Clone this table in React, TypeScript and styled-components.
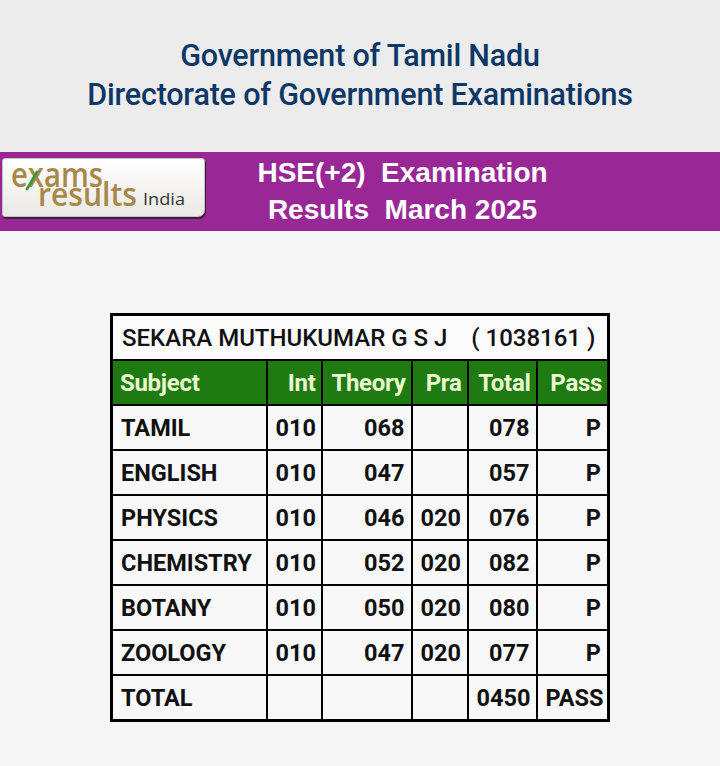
import React from "react";
import styled, { createGlobalStyle } from "styled-components";

const GlobalStyle = createGlobalStyle`
  html, body {
    margin: 0;
    padding: 0;
    background: #f6f6f6;
  }
  body {
    font-family: Roboto, "Liberation Sans", sans-serif;
  }
`;

type Mark = {
    subject: string;
    int: string;
    theory: string;
    pra: string;
    total: string;
    pass: string;
};

const marks: Mark[] = [
    { subject: "TAMIL", int: "010", theory: "068", pra: "", total: "078", pass: "P" },
    { subject: "ENGLISH", int: "010", theory: "047", pra: "", total: "057", pass: "P" },
    { subject: "PHYSICS", int: "010", theory: "046", pra: "020", total: "076", pass: "P" },
    { subject: "CHEMISTRY", int: "010", theory: "052", pra: "020", total: "082", pass: "P" },
    { subject: "BOTANY", int: "010", theory: "050", pra: "020", total: "080", pass: "P" },
    { subject: "ZOOLOGY", int: "010", theory: "047", pra: "020", total: "077", pass: "P" },
    { subject: "TOTAL", int: "", theory: "", pra: "", total: "0450", pass: "PASS" },
];

const LogoMark = () => (
    <LogoSvg width="201" height="57" viewBox="0 0 201 57">
        <LogoWord x="8" y="28" fontSize="34" textLength="92" lengthAdjust="spacingAndGlyphs">exams</LogoWord>
        {/* green stroke across the x */}
        <path d="M24 30 L34 13" stroke="#3c9b35" strokeWidth="2.8" strokeLinecap="round" />
        <LogoWord x="35" y="47" fontSize="33" textLength="99" lengthAdjust="spacingAndGlyphs">results</LogoWord>
        <LogoSmall x="140" y="46" fontSize="16" textLength="42" lengthAdjust="spacingAndGlyphs">India</LogoSmall>
    </LogoSvg>
);

const App = () => {
    return (
        <Page>
            <GlobalStyle />
            <Header>
                <HeaderTitle>Government of Tamil Nadu</HeaderTitle>
                <HeaderTitle>Directorate of Government Examinations</HeaderTitle>
            </Header>

            <Band>
                <Logo>
                    <LogoMark />
                </Logo>
                <BandTitle>
                    <BandLine>HSE(+2)  Examination</BandLine>
                    <BandLine>Results  March 2025</BandLine>
                </BandTitle>
            </Band>

            <Main>
                <ResultTable>
                    <colgroup>
                        <col style={{ width: 155 }} />
                        <col style={{ width: 55 }} />
                        <col style={{ width: 90 }} />
                        <col style={{ width: 56 }} />
                        <col style={{ width: 69 }} />
                        <col style={{ width: 72 }} />
                    </colgroup>
                    <tbody>
                        <tr>
                            <NameCell colSpan={6}>SEKARA MUTHUKUMAR G S J    ( 1038161 )</NameCell>
                        </tr>
                        <tr>
                            <HeadCell>Subject</HeadCell>
                            <HeadCell $right>Int</HeadCell>
                            <HeadCell $right>Theory</HeadCell>
                            <HeadCell $right>Pra</HeadCell>
                            <HeadCell $right>Total</HeadCell>
                            <HeadCell $right>Pass</HeadCell>
                        </tr>
                        {marks.map(m => (
                            <tr key={m.subject}>
                                <Cell>{m.subject}</Cell>
                                <Cell $center>{m.int}</Cell>
                                <Cell $right>{m.theory}</Cell>
                                <Cell $center>{m.pra}</Cell>
                                <Cell $right>{m.total}</Cell>
                                <Cell $right>{m.pass}</Cell>
                            </tr>
                        ))}
                    </tbody>
                </ResultTable>
            </Main>
        </Page>
    );
};

const Page = styled.div`
  width: 720px;
  min-height: 766px;
  background: #f6f6f6;
`;

const Header = styled.header`
  height: 152px;
  box-sizing: border-box;
  background: #ececec;
  display: flex;
  flex-direction: column;
  align-items: center;
  justify-content: center;
  padding-bottom: 2px;
`;

const HeaderTitle = styled.div`
  font-family: Roboto, "Liberation Sans", sans-serif;
  font-weight: 500;
  font-size: 30.5px;
  line-height: 39px;
  color: #0c3766;
  letter-spacing: -0.2px;
`;

const Band = styled.div`
  height: 79px;
  background: #9a2796;
  display: flex;
  align-items: flex-start;
`;

const Logo = styled.div`
  margin: 6px 0 0 2px;
  width: 203px;
  height: 59px;
  box-sizing: border-box;
  background: linear-gradient(#ffffff, #e9e8e4);
  border: 1px solid #c4c4c4;
  border-radius: 3px 3px 7px 3px;
  box-shadow: 1px 2px 0 #3d1f3d;
  display: flex;
`;

const LogoSvg = styled.svg`
  overflow: visible;
`;

const LogoWord = styled.text`
  font-family: "Open Sans", "DejaVu Sans", sans-serif;
  font-weight: 600;
  fill: #a8884a;
`;

const LogoSmall = styled.text`
  font-family: "Open Sans", "DejaVu Sans", sans-serif;
  fill: #333333;
`;

const BandTitle = styled.div`
  flex: 1;
  display: flex;
  flex-direction: column;
  align-items: center;
  padding: 2px 120px 0 0;
`;

const BandLine = styled.div`
  font-family: "Liberation Sans", Arial, sans-serif;
  font-weight: 700;
  font-size: 28px;
  line-height: 37px;
  color: #ffffff;
  white-space: pre;
`;

const Main = styled.main`
  padding-top: 82px;
  display: flex;
  justify-content: center;
`;

const ResultTable = styled.table`
  width: 500px;
  table-layout: fixed;
  border-collapse: collapse;
  border: 3px solid #000;
  font-family: Roboto, "Liberation Sans", sans-serif;
`;

const NameCell = styled.td`
  height: 43px;
  padding: 0 4px 0 9px;
  border: 2px solid #000;
  background: #fbfbfb;
  font-size: 24px;
  font-weight: 500;
  color: #111;
  white-space: pre;
`;

const HeadCell = styled.td<{ $right?: boolean }>`
  height: 43px;
  padding: 0 5px 0 7px;
  border: 2px solid #000;
  background: #1f7a12;
  color: #eaf8cf;
  font-size: 24px;
  font-weight: 700;
  letter-spacing: -0.3px;
  text-align: ${p => (p.$right ? "right" : "left")};
`;

const Cell = styled.td<{ $right?: boolean; $center?: boolean }>`
  height: 43px;
  padding: 0 6px 0 8px;
  border: 2px solid #000;
  background: #f8f8f8;
  color: #111;
  font-size: 23.5px;
  font-weight: 700;
  text-align: ${p => (p.$right ? "right" : p.$center ? "center" : "left")};
`;

export default App;
